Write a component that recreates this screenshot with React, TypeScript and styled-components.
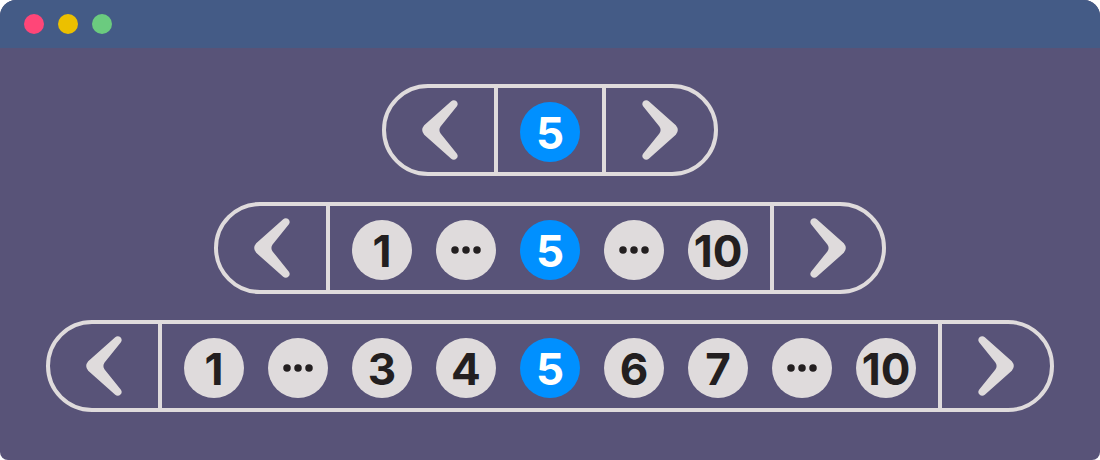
import React from "react";
import styled, { createGlobalStyle } from "styled-components";

const colors = {
  page: "#ffffff",
  canvas: "#585378",
  titleBar: "#445b86",
  light: "#dfdbdc",
  ink: "#231f20",
  accent: "#0090ff",
};

const GlobalStyle = createGlobalStyle`
  *, *::before, *::after { box-sizing: border-box; }
  body { margin: 0; background: ${colors.page}; font-family: Inter, "Liberation Sans", sans-serif; }
`;

const Window = styled.div`
  display: flex;
  flex-direction: column;
  min-height: 100vh;
  border-radius: 16px 16px 8px 8px;
  overflow: hidden;
  background: ${colors.canvas};
`;

const TitleBar = styled.header`
  display: flex;
  align-items: center;
  gap: 14px;
  height: 48px;
  padding: 0 24px;
  background: ${colors.titleBar};
`;

const Light = styled.span<{ $color: string }>`
  width: 20px;
  height: 20px;
  border-radius: 50%;
  background: ${(p) => p.$color};
`;

const Stage = styled.main`
  display: flex;
  flex-direction: column;
  align-items: center;
  gap: 26px;
  padding: 36px 0 48px;
`;

const Pill = styled.nav`
  display: flex;
  border: 4px solid ${colors.light};
  border-radius: 46px;
`;

const StepButton = styled.button`
  display: flex;
  align-items: center;
  justify-content: center;
  width: 108px;
  height: 84px;
  padding: 0;
  border: 0;
  background: transparent;
  color: ${colors.light};
  cursor: pointer;
`;

const PageList = styled.ol`
  display: flex;
  gap: 24px;
  margin: 0;
  padding: 14px 22px 10px;
  border: solid ${colors.light};
  border-width: 0 4px;
  list-style: none;
`;

const PageButton = styled.button<{ $current?: boolean }>`
  display: flex;
  align-items: center;
  justify-content: center;
  width: 60px;
  height: 60px;
  padding: 2px 0 0;
  border: 0;
  border-radius: 50%;
  background: ${(p) => (p.$current ? colors.accent : colors.light)};
  color: ${(p) => (p.$current ? "#ffffff" : colors.ink)};
  font-family: inherit;
  font-size: 44px;
  font-weight: 700;
  font-variation-settings: "opsz" 14;
  line-height: 58px;
  cursor: pointer;
`;

const MoreButton = styled(PageButton)`
  padding: 0;
`;

const CHEVRON_LEFT =
  "M29.2 1.2C32.5-1.6 37.7 2.4 34.9 6.2L18.6 26.6Q16.2 30 18.6 33.4L34.9 53.8C37.7 57.6 32.5 61.6 29.2 58.8L2.2 34.8Q-1.8 30 2.2 25.2Z";
const CHEVRON_RIGHT =
  "M6.8 1.2C3.5-1.6-1.7 2.4 1.1 6.2L17.4 26.6Q19.8 30 17.4 33.4L1.1 53.8C-1.7 57.6 3.5 61.6 6.8 58.8L33.8 34.8Q37.8 30 33.8 25.2Z";

function Chevron({ d }: { d: string }) {
  return (
    <svg width="36" height="60" viewBox="0 0 36 60" fill="currentColor" aria-hidden="true">
      <path d={d} />
    </svg>
  );
}

function Ellipsis() {
  return (
    <svg width="30" height="8" viewBox="0 0 30 8" fill="currentColor" aria-hidden="true">
      <circle cx="4" cy="4" r="3.75" />
      <circle cx="15" cy="4" r="3.75" />
      <circle cx="26" cy="4" r="3.75" />
    </svg>
  );
}

type Item = number | "more";

function Pagination({ items, current, label }: { items: Item[]; current: number; label: string }) {
  return (
    <Pill aria-label={label}>
      <StepButton type="button" aria-label="Previous page">
        <Chevron d={CHEVRON_LEFT} />
      </StepButton>
      <PageList>
        {items.map((item, index) => (
          <li key={index}>
            {item === "more" ? (
              <MoreButton type="button" aria-label="More pages">
                <Ellipsis />
              </MoreButton>
            ) : (
              <PageButton
                type="button"
                $current={item === current}
                aria-current={item === current ? "page" : undefined}
              >
                {item}
              </PageButton>
            )}
          </li>
        ))}
      </PageList>
      <StepButton type="button" aria-label="Next page">
        <Chevron d={CHEVRON_RIGHT} />
      </StepButton>
    </Pill>
  );
}

export default function App() {
  return (
    <>
      <GlobalStyle />
      <Window>
        <TitleBar>
          <Light $color="#ff4678" />
          <Light $color="#ecc000" />
          <Light $color="#6bcb7f" />
        </TitleBar>
        <Stage>
          <Pagination label="Compact pagination" items={[5]} current={5} />
          <Pagination label="Medium pagination" items={[1, "more", 5, "more", 10]} current={5} />
          <Pagination
            label="Full pagination"
            items={[1, "more", 3, 4, 5, 6, 7, "more", 10]}
            current={5}
          />
        </Stage>
      </Window>
    </>
  );
}
